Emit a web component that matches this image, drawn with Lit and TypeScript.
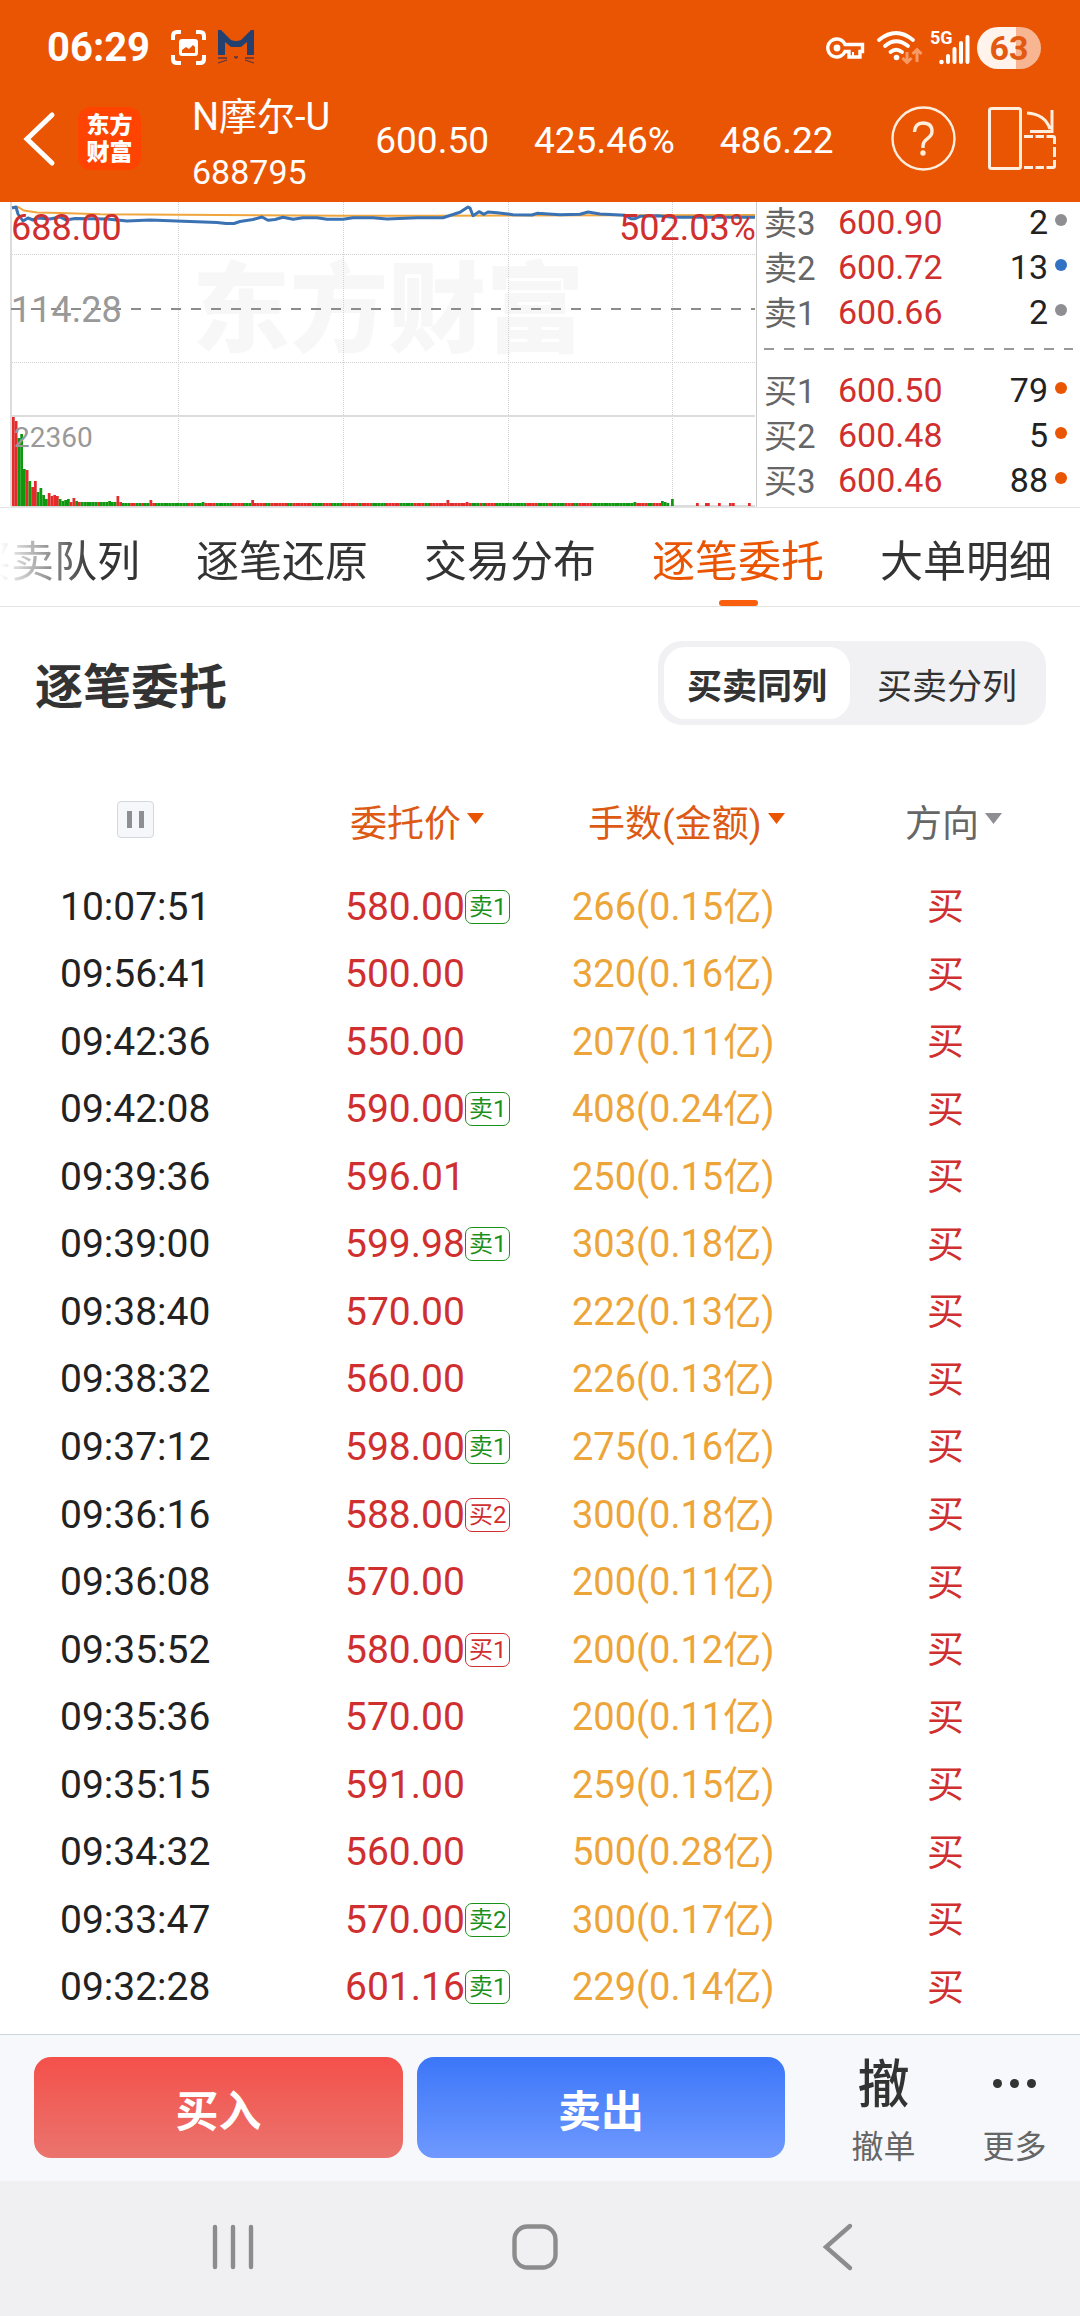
import { LitElement, html, svg, css } from "lit";
import { customElement, state } from "lit/decorators.js";
import { classMap } from "lit/directives/class-map.js";

type Side = "up" | "down";

interface Quote {
  label: string;
  price: string;
  volume: number;
  dot: "grey" | "blue" | "orange";
}

interface Order {
  time: string;
  price: string;
  tag?: string;
  amount: string;
}

const ASKS: Quote[] = [
  { label: "卖3", price: "600.90", volume: 2, dot: "grey" },
  { label: "卖2", price: "600.72", volume: 13, dot: "blue" },
  { label: "卖1", price: "600.66", volume: 2, dot: "grey" },
];

const BIDS: Quote[] = [
  { label: "买1", price: "600.50", volume: 79, dot: "orange" },
  { label: "买2", price: "600.48", volume: 5, dot: "orange" },
  { label: "买3", price: "600.46", volume: 88, dot: "orange" },
];

const TABS = ["买卖队列", "逐笔还原", "交易分布", "逐笔委托", "大单明细"];

const ORDERS: Order[] = [
  { time: "10:07:51", price: "580.00", tag: "卖1", amount: "266(0.15亿)" },
  { time: "09:56:41", price: "500.00", amount: "320(0.16亿)" },
  { time: "09:42:36", price: "550.00", amount: "207(0.11亿)" },
  { time: "09:42:08", price: "590.00", tag: "卖1", amount: "408(0.24亿)" },
  { time: "09:39:36", price: "596.01", amount: "250(0.15亿)" },
  { time: "09:39:00", price: "599.98", tag: "卖1", amount: "303(0.18亿)" },
  { time: "09:38:40", price: "570.00", amount: "222(0.13亿)" },
  { time: "09:38:32", price: "560.00", amount: "226(0.13亿)" },
  { time: "09:37:12", price: "598.00", tag: "卖1", amount: "275(0.16亿)" },
  { time: "09:36:16", price: "588.00", tag: "买2", amount: "300(0.18亿)" },
  { time: "09:36:08", price: "570.00", amount: "200(0.11亿)" },
  { time: "09:35:52", price: "580.00", tag: "买1", amount: "200(0.12亿)" },
  { time: "09:35:36", price: "570.00", amount: "200(0.11亿)" },
  { time: "09:35:15", price: "591.00", amount: "259(0.15亿)" },
  { time: "09:34:32", price: "560.00", amount: "500(0.28亿)" },
  { time: "09:33:47", price: "570.00", tag: "卖2", amount: "300(0.17亿)" },
  { time: "09:32:28", price: "601.16", tag: "卖1", amount: "229(0.14亿)" },
];

/* Opening minutes of the session: direction and bar height. */
const OPENING: [Side, number][] = [
  ["up", 89], ["up", 85], ["down", 68], ["down", 72], ["down", 37], ["up", 36],
  ["down", 25], ["up", 19], ["up", 25], ["down", 14], ["down", 18], ["down", 11],
  ["down", 7], ["up", 13], ["up", 10], ["up", 11], ["up", 10], ["down", 7],
  ["down", 5], ["down", 6], ["down", 7], ["up", 4], ["up", 8], ["down", 5],
];

/* Later minutes: runs of one direction, given by the x where each run ends. */
const RUNS: [Side, number][] = [
  ["up", 80], ["down", 97], ["up", 100], ["down", 115], ["up", 122], ["down", 130],
  ["up", 134], ["down", 139], ["up", 143], ["down", 148], ["up", 154], ["down", 187],
  ["up", 193], ["down", 204], ["up", 213], ["down", 231], ["up", 243], ["down", 249],
  ["up", 263], ["down", 270], ["up", 287], ["down", 292], ["up", 311], ["down", 322],
  ["up", 330], ["down", 342], ["up", 356], ["down", 361], ["up", 370], ["down", 386],
  ["up", 399], ["down", 411], ["up", 424], ["down", 428], ["up", 471], ["down", 478],
  ["up", 481], ["down", 485], ["up", 495], ["down", 526], ["up", 537], ["down", 547],
  ["up", 551], ["down", 563], ["up", 573], ["down", 577], ["up", 592], ["down", 635],
  ["up", 645], ["down", 652], ["up", 660], ["down", 668],
];

/* Single taller bars among the later minutes: x and height. */
const SPIKES: [number, number][] = [
  [109, 5], [118, 10], [121, 4], [151, 6], [204, 4], [252, 6], [447, 6], [467, 4],
  [635, 4], [662, 5], [665, 4],
];

const CLOSING = [697, 706, 708, 719, 730, 733, 749];
const BAR = 2.75;
const BASE = 304;

function volumeBars() {
  const bars: { x: number; h: number; side: Side }[] = OPENING.map(([side, h], i) => ({
    x: 12 + i * BAR,
    h,
    side,
  }));
  let run = 0;
  for (let x = 12 + OPENING.length * BAR; x < 668; x += BAR) {
    while (run < RUNS.length - 1 && x >= RUNS[run][1]) run++;
    const spike = SPIKES.find(([at]) => at >= x && at < x + BAR);
    bars.push({ x, h: spike ? spike[1] : x < 120 ? 4 : 3, side: RUNS[run][0] });
  }
  bars.push({ x: 671, h: 7, side: "down" });
  for (const x of CLOSING) bars.push({ x: x - 1, h: 3, side: "up" });
  return bars.map(
    (b) => svg`<rect class=${b.side} x=${b.x} y=${BASE - b.h} width=${BAR} height=${b.h} />`
  );
}

@customElement("price-chart")
export class PriceChart extends LitElement {
  static styles = css`
    :host { display: block; min-width: 0; background: #fff; }
    .chart { display: block; width: 100%; height: auto; font-family: Roboto, "Noto Sans CJK SC", sans-serif; }
    .grid { stroke: #d2d2d2; stroke-width: 1; stroke-dasharray: 1 1; fill: none; }
    .frame { stroke: #dcdcdc; stroke-width: 2; fill: none; }
    .prev { stroke: #8c8c8c; stroke-width: 2; stroke-dasharray: 10 10; }
    .mark { font-size: 98px; font-weight: 900; fill: #f7f7f7; }
    .avg { stroke: #f0a63c; stroke-width: 2; fill: none; }
    .price { stroke: #3a72b4; stroke-width: 3; fill: none; stroke-linejoin: round; }
    .up { fill: #e32b2b; }
    .down { fill: #0f970f; }
    .red { font-size: 36px; fill: #d02f2f; }
    .grey { font-size: 36px; fill: #999; }
    .small { font-size: 28px; fill: #999; }
  `;

  render() {
    return html`
      <svg class="chart" viewBox="0 0 756 305" role="img" aria-label="分时图">
        <text class="mark" x="192" y="142">东方财富</text>
        <path class="grid" d="M12 52.5H755M12 160.5H755M178.5 0V304M343.5 0V304M508.5 0V304M672.5 0V304" />
        <path class="frame" d="M11 0V304M11 214H755M11 304H755" />
        <line class="prev" x1="11" y1="107" x2="755" y2="107" />
        ${volumeBars()}
        <path class="avg" d="M12 5H18L24 8.500L37 10.500L60 11L100 12.300L220 13L343 13.700H443L755 13" />
        <path
          class="price"
          d="M12 6L16 5L18 12L23 19L28 16L33 18L38 16L50 17L60 15L66 18L75 16.500L107 17L127 19L150 18L190 19.500L217 20.500L226 21.500H234L240 19.500L253 17.500L262 15L268 18.300L275 17.500L283 15.300L293 17.300L303 15.700H317L327 17.300H343L353 15.700H373L387 17L417 15.700H443L460 10.300L468 5L470 6L473 13.700L479 9.700L484 12.300L488 10L497 10.700L513 12.700L532 13L537 11.300L560 12.700L580 12.300L588 10L600 12L625 13.300L631 16.700H635L640 14.300L658 13.700L673 15.300H755"
        />
        <text class="red" x="11" y="38">688.00</text>
        <text class="red" x="756" y="38" text-anchor="end">502.03%</text>
        <text class="grey" x="11" y="120">114.28</text>
        <text class="small" x="14" y="245">22360</text>
      </svg>
    `;
  }
}

@customElement("order-book")
export class OrderBook extends LitElement {
  static styles = css`
    :host { display: block; min-width: 0; background: #fff; border-left: 1px solid #ccc; box-sizing: border-box; }
    .side { display: flex; flex-direction: column; gap: 5px; margin: 0; padding: 0 13px 0 7px; list-style: none; }
    .row { display: flex; align-items: center; font-size: 34px; line-height: 40px; }
    .label { width: 74px; padding-top: 4px; line-height: 36px; font-size: 33px; color: #666; }
    .price { flex: 1; color: #d02f2f; }
    .volume { color: #222; }
    .dot { width: 12px; height: 12px; margin: 0 0 4px 7px; border-radius: 50%; }
    .dot-grey { background: #8e8e93; }
    .dot-blue { background: #3272c4; }
    .dot-orange { background: #ea5504; }
    .split {
      height: 2px;
      margin: 16px 7px 20px;
      background: repeating-linear-gradient(90deg, #999 0 10px, transparent 10px 20px);
    }
  `;

  private side(quotes: Quote[]) {
    return html`
      <ul class="side">
        ${quotes.map(
          (q) => html`
            <li class="row">
              <span class="label">${q.label}</span>
              <span class="price">${q.price}</span>
              <span class="volume">${q.volume}</span>
              <span class="dot dot-${q.dot}"></span>
            </li>
          `
        )}
      </ul>
    `;
  }

  render() {
    return html`${this.side(ASKS)}<div class="split"></div>${this.side(BIDS)}`;
  }
}

@customElement("app-root")
export class AppRoot extends LitElement {
  static styles = css`
    :host {
      display: flex;
      flex-direction: column;
      min-height: 100vh;
      background: #fff;
      color: #333;
      font-family: Roboto, "Noto Sans CJK SC", sans-serif;
    }
    * { box-sizing: border-box; }
    button { margin: 0; padding: 0; border: 0; background: none; color: inherit; font: inherit; }
    svg { display: block; flex: none; overflow: visible; }

    .header { background: #ea5504; color: #fff; }
    .status { display: flex; align-items: center; height: 75px; padding: 20px 39px 0 47px; }
    .clock { margin-right: 21px; font-size: 40px; font-weight: 700; line-height: 48px; }
    .status-icons { display: flex; align-items: center; gap: 12px; flex: 1; }
    .battery {
      display: flex;
      align-items: center;
      justify-content: center;
      width: 64px;
      height: 42px;
      margin-left: 6px;
      border-radius: 21px;
      background: linear-gradient(90deg, #fff3ec 0 61%, #f8b592 61%);
      color: #e25a12;
      font-size: 34px;
      font-weight: 700;
    }

    .bar { display: flex; align-items: center; height: 127px; padding: 0 24px; }
    .logo {
      display: flex;
      flex-direction: column;
      align-items: center;
      justify-content: center;
      width: 63px;
      height: 63px;
      margin: 0 51px 0 24px;
      border-radius: 13px;
      background: #ff4300;
      font-size: 23px;
      font-weight: 900;
      line-height: 27px;
    }
    .stock { display: flex; flex-direction: column; padding-top: 13px; }
    .name { font-size: 38px; font-weight: 400; line-height: 55px; margin: 0; white-space: nowrap; }
    .code { font-size: 34px; line-height: 55px; }
    .figures { display: flex; flex: 1; gap: 45px; padding: 5px 0 0 45px; font-size: 37px; line-height: 44px; }
    .tools { display: flex; align-items: center; gap: 32px; }

    .market { display: grid; grid-template-columns: 756fr 324fr; }

    .tabs {
      display: flex;
      height: 100px;
      overflow: hidden;
      border-top: 1px solid #e3e3e3;
      border-bottom: 1px solid #e3e3e3;
      background: #fff;
    }
    .tabs-fade {
      display: flex;
      -webkit-mask-image: linear-gradient(90deg, transparent, #000 92px);
      mask-image: linear-gradient(90deg, transparent, #000 92px);
    }
    .tab-strip { display: flex; gap: 56px; margin-left: -32px; }
    .tab {
      display: flex;
      flex-direction: column;
      align-items: center;
      justify-content: space-between;
      padding-top: 22px;
      font-size: 43px;
      line-height: 64px;
      white-space: nowrap;
    }
    .tab::after { content: ""; width: 39px; height: 6px; border-radius: 3px; }
    .tab.active { color: #ea5504; }
    .tab.active::after { background: #f95f0c; }

    .title-row { display: flex; align-items: center; justify-content: space-between; padding: 34px 34px 0 35px; }
    .title { margin: 0; padding-top: 9px; font-size: 48px; font-weight: 700; line-height: 64px; }
    .segment { display: flex; gap: 4px; padding: 6px; border-radius: 24px; background: #f1f1f4; }
    .segment button { height: 72px; padding: 0 23px; border-radius: 21px; font-size: 35px; }
    .segment button.active { background: #fff; font-weight: 700; }

    .orders { display: flex; flex: 1; flex-direction: column; padding: 48px 0 13px 60px; }
    .orders thead { display: block; }
    .orders tbody { display: grid; flex: 1; grid-auto-rows: 1fr; }
    .line { display: grid; grid-template-columns: 285fr 227fr 333fr 175fr; align-items: center; }
    .head { height: 100px; padding-top: 3px; }
    .head th { padding: 0; font-size: 37px; font-weight: 400; text-align: left; }
    .head .h-time { padding-left: 57px; }
    .head .h-price { padding-left: 5px; }
    .head .h-amount { padding-left: 16px; }
    .sort { display: flex; align-items: center; gap: 6px; line-height: 44px; color: #666; white-space: nowrap; }
    .sort svg { fill: #8e8e93; margin-bottom: 12px; }
    .sort.on { color: #dc5a14; }
    .sort.on svg { fill: #ea5504; }
    .pause {
      display: flex;
      align-items: center;
      justify-content: center;
      gap: 7px;
      width: 37px;
      height: 37px;
      margin-bottom: 10px;
      border: 1px solid #d5d7de;
      border-radius: 4px;
      background: #f6f7fa;
    }
    .pause i { width: 5px; height: 17px; background: #8e8e93; }
    .line td { padding: 0; font-size: 39px; line-height: 46px; white-space: nowrap; }
    .time { color: #222; }
    .price { display: flex; align-items: center; color: #d02f2f; }
    .line .amount { color: #eda53a; font-size: 38px; }
    .line .way { padding: 3px 0 0 22px; color: #d02f2f; font-size: 37px; }
    .tag {
      height: 34px;
      padding: 0 3px;
      border: 1px solid currentColor;
      border-radius: 7px;
      font-size: 24px;
      line-height: 32px;
    }
    .tag.sell { color: #1c901c; }

    .actions {
      display: grid;
      grid-template-columns: 369fr 368fr 281fr;
      gap: 14px;
      align-items: start;
      height: 147px;
      padding: 22px 0 0 34px;
      border-top: 1px solid #cdd5dc;
      background: #f6f8fb;
    }
    .trade { height: 101px; border-radius: 17px; color: #fff; font-size: 43px; font-weight: 700; }
    .trade.buy { background: linear-gradient(#f4504a, #eb746e); }
    .trade.sell { background: linear-gradient(#3b76f8, #6f99ff); }
    .more { display: grid; grid-template-columns: 1fr 1fr; height: 106px; padding-left: 19px; }
    .act { display: flex; flex-direction: column; align-items: center; justify-content: space-between; }
    .act-icon { display: flex; align-items: center; height: 52px; font-size: 52px; line-height: 52px; font-weight: 500; }
    .act-icon.glyph { padding-top: 6px; }
    .act-label { font-size: 32px; line-height: 32px; color: #666; }

    .nav { display: flex; height: 135px; padding: 0 91px 4px 82px; background: #f0f0f3; }
    .nav button { display: flex; flex: 1; align-items: center; justify-content: center; }
  `;

  @state() private tab = "逐笔委托";
  @state() private layout = "买卖同列";

  private caret() {
    return html`<svg width="17" height="11" viewBox="0 0 17 11"><path d="M0 0H17L8.500 11Z" /></svg>`;
  }

  private statusBar() {
    return html`
      <div class="status">
        <span class="clock">06:29</span>
        <div class="status-icons">
          <svg width="35" height="35" viewBox="0 0 35 35">
            <path
              d="M2 10V6Q2 2 6 2H10M25 2H29Q33 2 33 6V10M33 25V29Q33 33 29 33H25M10 33H6Q2 33 2 29V25"
              fill="none" stroke="#fff" stroke-width="4" />
            <rect x="8" y="9" width="19" height="17" rx="3" fill="#fff" />
            <path d="M11 23V20L15 17L18 19L22 15L24 17V23Z" fill="#ea5504" />
          </svg>
          <svg width="36" height="35" viewBox="0 0 36 35">
            <path d="M0 0H3L13 10Q18 12 23 10L33 0H36V25H29V12L23 17H13L7 12V25H0Z" fill="#24406e" />
            <path d="M0 28H9M0 33L9 30M27 28H36M27 30L36 33M16 27H20M18 27V29" stroke="#5a3440" stroke-width="1.300" />
          </svg>
        </div>
        <svg width="39" height="22" viewBox="0 0 39 22">
          <path
            d="M11 2A9 9 0 1 0 19 14.500H23V20H34V14.500H36.500V7.500H19A9 9 0 0 0 11 2Z"
            fill="none" stroke="#fff" stroke-width="3.400" />
          <path d="M27 20V15M34 20V15" stroke="#fff" stroke-width="2" />
          <circle cx="11" cy="11" r="3.400" fill="#fff" />
        </svg>
        <svg width="58" height="36" viewBox="0 0 58 36">
          <g fill="none" stroke="#fff" stroke-width="3.800" stroke-linecap="round">
            <path d="M14 10Q31 -4 48 10" />
            <path d="M20 16Q31 6.500 43 16" />
            <path d="M25.500 22Q31 17.500 37 22" />
          </g>
          <circle cx="31.500" cy="27.500" r="2.800" fill="#fff" />
          <path
            d="M42 22V32M37.500 28L42 32.500L46.500 28M52 32V20M47.500 24L52 19.500L56.500 24"
            fill="none" stroke="#f79a68" stroke-width="3" />
        </svg>
        <svg width="48" height="36" viewBox="0 0 48 36">
          <text x="7" y="14" font-size="18" font-weight="700" fill="#fff">5G</text>
          <path d="M25 32V26M31.500 32V19M38 32V13M44.500 32V7" stroke="#fff" stroke-width="4" stroke-linecap="round" />
          <circle cx="18.500" cy="32" r="2.300" fill="#fff" />
        </svg>
        <span class="battery">63</span>
      </div>
    `;
  }

  private titleBar() {
    return html`
      <div class="bar">
        <button aria-label="返回">
          <svg width="30" height="52" viewBox="0 0 30 52">
            <path d="M28 2L3 26L28 50" fill="none" stroke="#fff" stroke-width="5" stroke-linecap="round" />
          </svg>
        </button>
        <div class="logo"><span>东方</span><span>财富</span></div>
        <div class="stock">
          <h1 class="name">N摩尔-U</h1>
          <span class="code">688795</span>
        </div>
        <div class="figures"><span>600.50</span><span>425.46%</span><span>486.22</span></div>
        <div class="tools">
          <button aria-label="帮助">
            <svg width="65" height="65" viewBox="0 0 65 65" fill="none" stroke="#ffeedd">
              <circle cx="32.500" cy="32.500" r="31" stroke-width="2.400" />
              <path
                d="M23.500 26Q24 17 32 17Q41 17 41 25.500Q41 29.500 36 33Q32 36 32 40V42"
                stroke-width="3.400" />
              <circle cx="32" cy="47" r="2.700" fill="#ffeedd" stroke="none" />
            </svg>
          </button>
          <button aria-label="横屏">
            <svg width="68" height="63" viewBox="0 0 68 63" fill="none" stroke="#ffeedd">
              <rect x="1.500" y="1.500" width="31" height="60" rx="2" stroke-width="3" />
              <path
                d="M36 29.500H45M47.500 29.500H56M58.500 29.500H65Q66.500 29.500 66.500 31V37M66.500 40V50M66.500 53V59Q66.500 60.500 65 60.500H58.500M56 60.500H47.500M45 60.500H36"
                stroke-width="3" />
              <path d="M39 6Q57 7 62 22M64 3V24.500H42" stroke-width="3" />
            </svg>
          </button>
        </div>
      </div>
    `;
  }

  private orderRow(o: Order) {
    return html`
      <tr class="line">
        <td class="time">${o.time}</td>
        <td class="price">
          ${o.price}${o.tag
            ? html`<span class=${classMap({ tag: true, sell: o.tag.startsWith("卖") })}>${o.tag}</span>`
            : ""}
        </td>
        <td class="amount">${o.amount}</td>
        <td class="way">买</td>
      </tr>
    `;
  }

  render() {
    return html`
      <header class="header">${this.statusBar()}${this.titleBar()}</header>

      <section class="market">
        <price-chart></price-chart>
        <order-book></order-book>
      </section>

      <nav class="tabs">
        <div class="tabs-fade">
          <div class="tab-strip">
            ${TABS.map(
              (t) => html`
                <button class=${classMap({ tab: true, active: t === this.tab })} @click=${() => (this.tab = t)}>
                  ${t}
                </button>
              `
            )}
          </div>
        </div>
      </nav>

      <div class="title-row">
        <h2 class="title">逐笔委托</h2>
        <div class="segment">
          ${["买卖同列", "买卖分列"].map(
            (m) => html`
              <button class=${classMap({ active: m === this.layout })} @click=${() => (this.layout = m)}>${m}</button>
            `
          )}
        </div>
      </div>

      <table class="orders">
        <thead>
          <tr class="line head">
            <th class="h-time"><button class="pause" aria-label="暂停"><i></i><i></i></button></th>
            <th class="h-price"><button class="sort on">委托价${this.caret()}</button></th>
            <th class="h-amount"><button class="sort on">手数(金额)${this.caret()}</button></th>
            <th><button class="sort">方向${this.caret()}</button></th>
          </tr>
        </thead>
        <tbody>
          ${ORDERS.map((o) => this.orderRow(o))}
        </tbody>
      </table>

      <footer class="actions">
        <button class="trade buy">买入</button>
        <button class="trade sell">卖出</button>
        <div class="more">
          <button class="act">
            <span class="act-icon glyph">撤</span>
            <span class="act-label">撤单</span>
          </button>
          <button class="act">
            <span class="act-icon">
              <svg width="43" height="9" viewBox="0 0 43 9" fill="#333">
                <circle cx="4.500" cy="4.500" r="4.500" />
                <circle cx="21.500" cy="4.500" r="4.500" />
                <circle cx="38.500" cy="4.500" r="4.500" />
              </svg>
            </span>
            <span class="act-label">更多</span>
          </button>
        </div>
      </footer>

      <nav class="nav">
        <button aria-label="最近任务">
          <svg width="42" height="46" viewBox="0 0 42 46" stroke="#8c8c8c" stroke-width="4.400" stroke-linecap="round">
            <path d="M3 3V43M21 3V43M39 3V43" />
          </svg>
        </button>
        <button aria-label="主屏幕">
          <svg width="46" height="46" viewBox="0 0 46 46" fill="none" stroke="#8c8c8c" stroke-width="4.400">
            <rect x="2.500" y="2.500" width="41" height="41" rx="13" />
          </svg>
        </button>
        <button aria-label="返回上一页">
          <svg width="30" height="48" viewBox="0 0 30 48" fill="none" stroke="#8c8c8c" stroke-width="4.400" stroke-linecap="round">
            <path d="M27 3L3 24L27 45" />
          </svg>
        </button>
      </nav>
    `;
  }
}
